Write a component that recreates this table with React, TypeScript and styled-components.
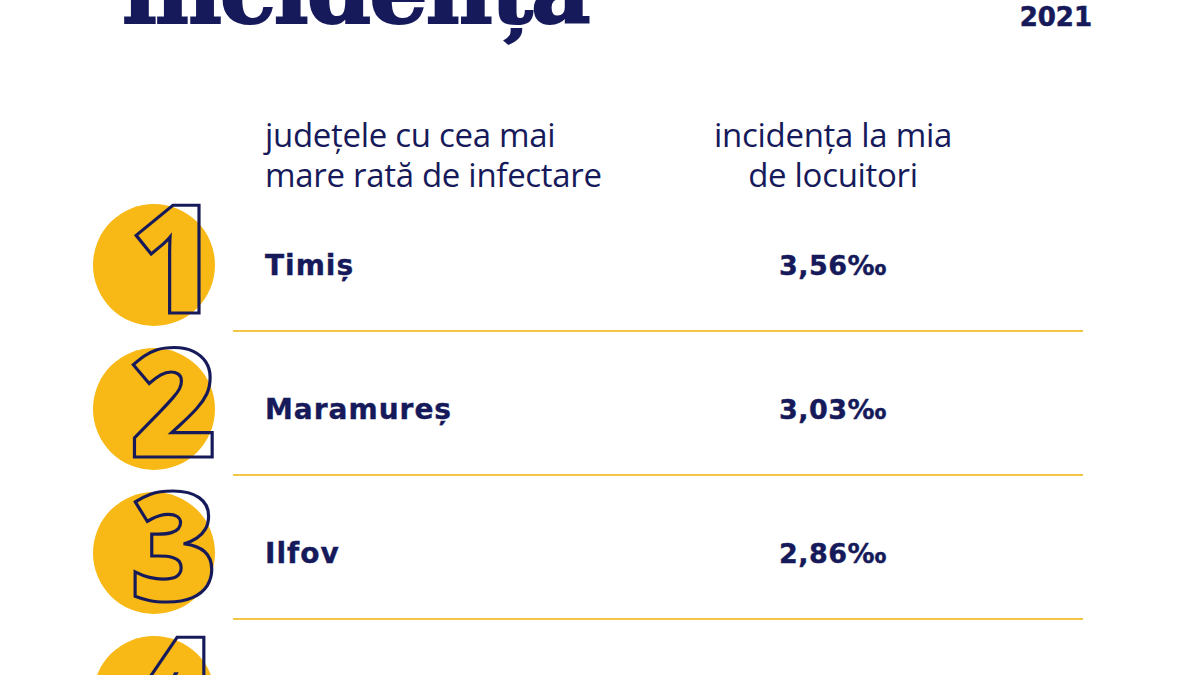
import React from "react";
import styled, { createGlobalStyle } from "styled-components";

const NAVY = "#161a5a";
const YELLOW = "#f8b816";
const LINE = "#f5c545";

const Global = createGlobalStyle`
  html, body {
    margin: 0;
    padding: 0;
    background: #ffffff;
    overflow: hidden;
  }
  body {
    font-family: "DejaVu Sans", sans-serif;
    color: ${NAVY};
  }
`;

const Page = styled.div`
  width: 1200px;
  height: 675px;
  overflow: hidden;
  padding-left: 93px;
  box-sizing: border-box;
`;

const TopBar = styled.header`
  display: flex;
  justify-content: space-between;
  align-items: flex-start;
  height: 38px;
  padding-left: 29px;
  padding-right: 108px;
`;

const Title = styled.h1`
  margin: -55px 0 0 0;
  font-family: "DejaVu Serif", serif;
  font-weight: 700;
  font-size: 92px;
  line-height: 92px;
  color: ${NAVY};
  letter-spacing: -2px;
  -webkit-text-stroke: 2px ${NAVY};
  white-space: nowrap;
`;

const Year = styled.div`
  margin-top: 4px;
  font-family: "DejaVu Sans", sans-serif;
  font-weight: 700;
  font-size: 26px;
  line-height: 26px;
  color: ${NAVY};
  -webkit-text-stroke: 0.6px ${NAVY};
`;

const ColumnsHeader = styled.div`
  display: grid;
  grid-template-columns: 140px 350px 500px;
  margin-top: 77px;
  margin-bottom: 9px;
`;

const HeadText = styled.div<{ $center?: boolean; $col: number }>`
  grid-column: ${(p) => p.$col};
  font-family: "Open Sans", sans-serif;
  font-size: 33px;
  letter-spacing: -0.3px;
  line-height: 40px;
  color: ${NAVY};
  text-align: ${(p) => (p.$center ? "center" : "left")};
  padding-left: ${(p) => (p.$center ? "0" : "32px")};
  white-space: nowrap;
`;

const Rows = styled.div`
  display: flex;
  flex-direction: column;
`;

const Row = styled.div`
  display: grid;
  grid-template-columns: 140px 350px 500px;
  grid-template-rows: 122px auto;
`;

const Badge = styled.div`
  grid-column: 1;
  grid-row: 1;
  position: relative;
  width: 122px;
  height: 122px;
  border-radius: 50%;
  background: ${YELLOW};
`;

const Digit = styled.span`
  position: absolute;
  top: -4px;
  left: 20px;
  right: -20px;
  text-align: center;
  font-family: "Open Sans", sans-serif;
  font-weight: 800;
  font-size: 150px;
  line-height: 110px;
  color: transparent;
  -webkit-text-stroke: 3.2px ${NAVY};
`;

const Name = styled.div`
  grid-column: 2;
  grid-row: 1;
  align-self: center;
  padding-left: 32px;
  font-family: "DejaVu Sans", sans-serif;
  font-weight: 700;
  font-size: 28px;
  letter-spacing: 1px;
  color: ${NAVY};
  -webkit-text-stroke: 0.4px ${NAVY};
`;

const Value = styled.div`
  grid-column: 3;
  grid-row: 1;
  align-self: center;
  text-align: center;
  font-family: "DejaVu Sans", sans-serif;
  font-weight: 700;
  font-size: 27px;
  letter-spacing: 0.5px;
  color: ${NAVY};
  -webkit-text-stroke: 0.4px ${NAVY};
`;

const Divider = styled.div`
  grid-column: 2 / span 2;
  grid-row: 2;
  height: 2px;
  margin: 4px 0 16px;
  background: ${LINE};
`;

const data = [
  { rank: "1", name: "Timiș", value: "3,56‰" },
  { rank: "2", name: "Maramureș", value: "3,03‰" },
  { rank: "3", name: "Ilfov", value: "2,86‰" },
  { rank: "4", name: "", value: "" },
];

export default function App() {
  return (
    <>
      <Global />
      <Page>
        <TopBar>
          <Title>incidența</Title>
          <Year>2021</Year>
        </TopBar>
        <ColumnsHeader>
          <HeadText $col={2}>
            județele cu cea mai
            <br />
            mare rată de infectare
          </HeadText>
          <HeadText $col={3} $center>
            incidența la mia
            <br />
            de locuitori
          </HeadText>
        </ColumnsHeader>
        <Rows>
          {data.map((d) => (
            <Row key={d.rank}>
              <Badge>
                <Digit>{d.rank}</Digit>
              </Badge>
              <Name>{d.name}</Name>
              <Value>{d.value}</Value>
              <Divider />
            </Row>
          ))}
        </Rows>
      </Page>
    </>
  );
}
